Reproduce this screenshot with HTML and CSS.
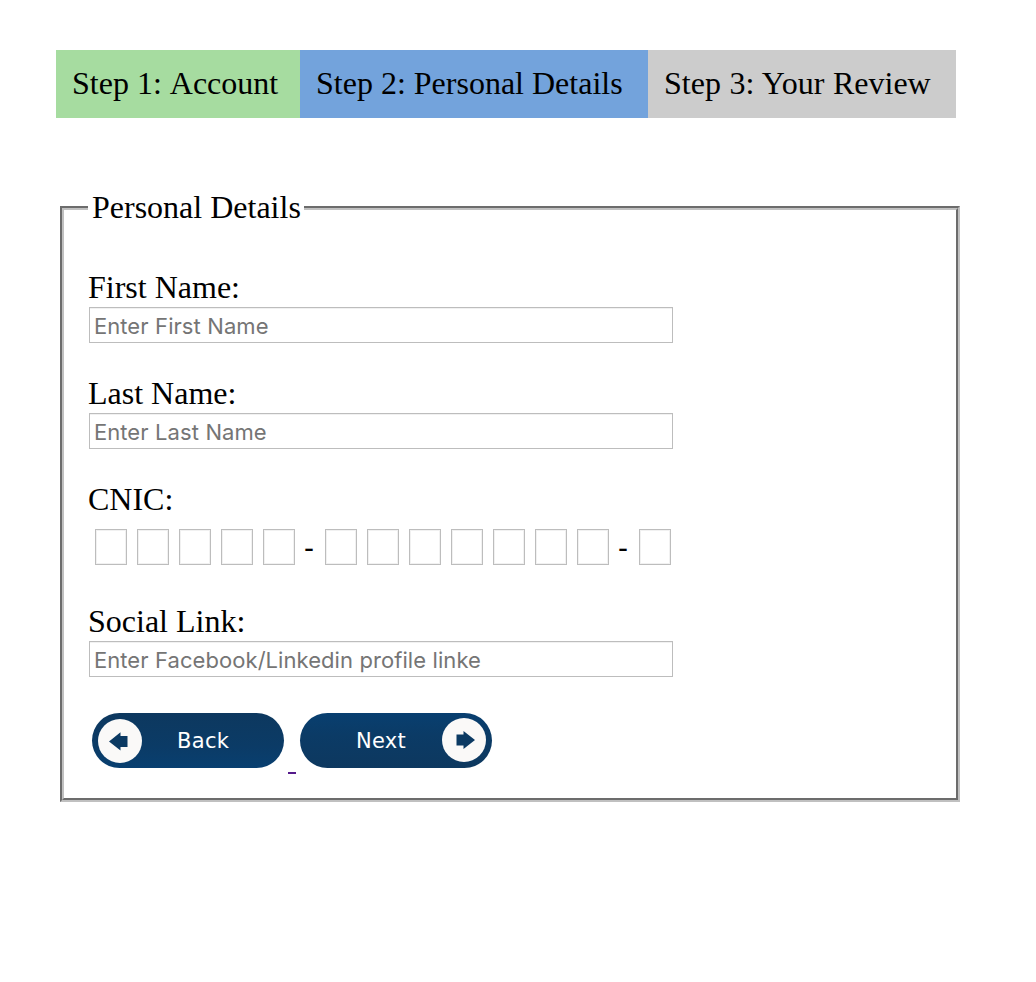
FILE: index.html
```html
<!DOCTYPE html>
<html lang="en">
<head>
<meta charset="utf-8">
<title>Personal Details</title>
<link rel="stylesheet" href="styles.css">
</head>
<body>
<div class="steps">
  <div class="step step-done">Step 1: Account</div>
  <div class="step step-current">Step 2: Personal Details</div>
  <div class="step step-next">Step 3: Your Review</div>
</div>
<form>
<fieldset class="panel">
  <legend class="legend">Personal Details</legend>
  <div class="field">
    <label class="label" for="first">First Name:</label>
    <input class="input" id="first" type="text" placeholder="Enter First Name">
  </div>
  <div class="field">
    <label class="label" for="last">Last Name:</label>
    <input class="input" id="last" type="text" placeholder="Enter Last Name">
  </div>
  <div class="field">
    <label class="label" for="cnic">CNIC:</label>
    <div class="cnic">
      <input class="digit" id="cnic" maxlength="1"><input class="digit" maxlength="1"><input class="digit" maxlength="1"><input class="digit" maxlength="1"><input class="digit" maxlength="1">
      <span class="dash">-</span>
      <input class="digit" maxlength="1"><input class="digit" maxlength="1"><input class="digit" maxlength="1"><input class="digit" maxlength="1"><input class="digit" maxlength="1"><input class="digit" maxlength="1"><input class="digit" maxlength="1">
      <span class="dash">-</span>
      <input class="digit" maxlength="1">
    </div>
  </div>
  <div class="field">
    <label class="label" for="social">Social Link:</label>
    <input class="input" id="social" type="text" placeholder="Enter Facebook/Linkedin profile linke">
  </div>
  <div class="actions">
    <a class="pill back"><span class="disc"><svg width="44" height="44" viewBox="0 0 44 44"><path d="M11 22.500 22.500 13.200v3.800H29.500V28h-7v3.500z"/></svg></span><span class="pill-text">Back</span></a>
    <span class="gap-line"></span>
    <a class="pill next"><span class="pill-text">Next</span><span class="disc"><svg width="44" height="44" viewBox="0 0 44 44"><path d="M33 22 21.500 13v3.500H14.500v11h7v3.500z"/></svg></span></a>
  </div>
</fieldset>
</form>
</body>
</html>
```

FILE: styles.css
```css
* { box-sizing: border-box; }
body {
  margin: 0;
  padding: 50px 76px 0 56px;
  background: #fff;
  color: #000;
  font: 32px/36px "Liberation Serif", "Times New Roman", serif;
  font-kerning: none;
}
.steps { display: flex; width: 900px; height: 68px; }
.step { padding: 15px 16px 17px; white-space: nowrap; }
.step-done { width: 244px; background: #a6dca0; }
.step-current { width: 348px; background: #73a3dc; }
.step-next { width: 308px; background: #ccc; font-kerning: normal; word-spacing: 0.6px; }
.panel {
  width: 900px;
  height: 612px;
  margin: 72px 0 0 4px;
  padding: 44px 24px 0;
  border: 4px groove #c0c0c0;
}
.legend { width: 216px; height: 36px; padding: 0 4px; line-height: 34px; white-space: nowrap; }
.field { margin-bottom: 33px; }
.label { display: block; height: 37px; line-height: 34px; }
.input, .digit {
  display: block;
  height: 36px;
  border: 1px solid #bdbdbd;
  border-radius: 0;
  background: #fff;
  box-shadow: inset 0 1px #f1f1f1;
  outline: 0;
}
.input {
  width: 584px;
  margin-left: 1px;
  padding: 2px 4px 0;
  font: 22px Inter, sans-serif;
  font-kerning: normal;
  letter-spacing: 0.05px;
  word-spacing: 0.3px;
}
.input::placeholder { color: #757575; opacity: 1; }
.cnic { display: flex; gap: 10px; padding: 10px 0 6px 7px; height: 52px; }
.digit { width: 32px; padding: 0; box-shadow: inset 0 0 0 1px #f1f1f1; }
.dash { width: 10px; line-height: 37px; font-family: "Liberation Sans", Arial, sans-serif; font-size: 30px; text-indent: -1px; }
.actions { display: flex; align-items: flex-start; padding: 3px 0 0 4px; }
.pill {
  display: flex;
  align-items: center;
  width: 192px;
  height: 55px;
  padding: 0 6px;
  border-radius: 28px;
  color: #fff;
  font: 21px "DejaVu Sans", sans-serif;
  letter-spacing: 0.3px;
}
.back { background: linear-gradient(#0d385f, #0b3b66 60%, #083f70); }
.next { background: linear-gradient(#083f70, #0b3b66 40%, #0d385f); }
.disc { width: 44px; height: 44px; border-radius: 50%; background: #faf9f8; }
.next .disc { margin: 0 0.5px 1px 0; }
.disc svg { display: block; fill: #0b3a63; }
.pill-text { flex: 1; margin-top: 1px; }
.back .pill-text { padding-left: 35px; }
.next .pill-text { padding-left: 50px; }
.gap-line { width: 8px; height: 2px; margin: 59px 4px 0; background: #551a8b; }
```
